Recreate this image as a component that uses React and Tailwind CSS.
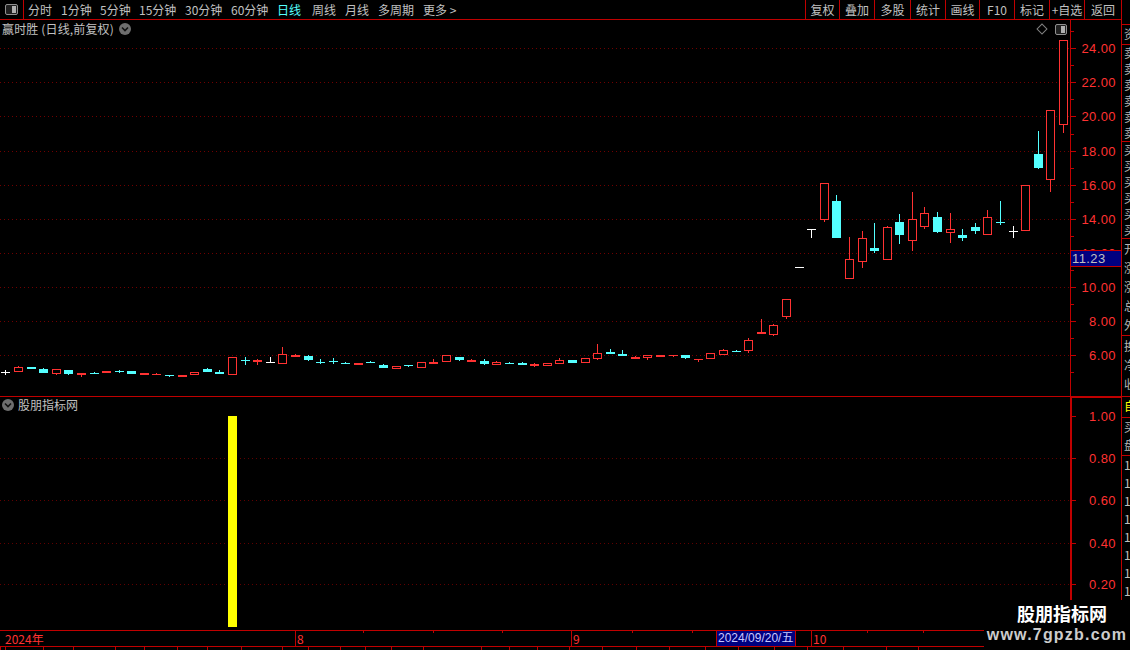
import React from 'react'

// kind, bodyTop, bodyBottom, wickTop, wickBottom (page pixels)
// r = hollow red, R = solid red, c = solid cyan, w = white doji
const candles = [
  ['w', 372, 373, 370, 375], ['r', 367, 372, 366, 372], ['c', 367, 369, 367, 369], ['c', 369, 373, 368, 373], ['r', 369, 374, 369, 375],
  ['c', 370, 374, 370, 375], ['R', 373, 375, 373, 377], ['c', 373, 374, 372, 374], ['R', 371, 373, 371, 373], ['c', 371, 372, 370, 373],
  ['c', 371, 374, 371, 374], ['R', 373, 375, 373, 375], ['R', 374, 375, 373, 375], ['c', 375, 376, 375, 377], ['R', 375, 377, 375, 377],
  ['r', 372, 375, 372, 375], ['c', 369, 372, 368, 372], ['c', 372, 374, 370, 374], ['r', 357, 375, 357, 375], ['c', 360, 361, 357, 365],
  ['R', 360, 362, 359, 365], ['w', 362, 363, 357, 363], ['r', 354, 364, 347, 364], ['r', 355, 357, 354, 357], ['c', 356, 360, 355, 361],
  ['c', 362, 363, 359, 364], ['c', 361, 362, 358, 364], ['c', 363, 364, 362, 364], ['R', 363, 365, 363, 365], ['c', 362, 363, 361, 363],
  ['c', 365, 368, 364, 368], ['r', 366, 369, 366, 369], ['c', 365, 366, 365, 367], ['r', 362, 368, 362, 368], ['R', 362, 364, 359, 364],
  ['r', 355, 362, 355, 362], ['c', 357, 360, 357, 361], ['R', 360, 362, 359, 362], ['c', 361, 364, 359, 365], ['r', 362, 365, 361, 365],
  ['c', 363, 364, 362, 364], ['c', 363, 365, 362, 365], ['R', 364, 366, 363, 367], ['r', 363, 366, 363, 366], ['r', 360, 364, 358, 364],
  ['c', 360, 363, 360, 363], ['r', 358, 363, 358, 363], ['r', 353, 359, 344, 360], ['c', 352, 354, 349, 354], ['c', 354, 356, 350, 356],
  ['R', 357, 359, 356, 359], ['r', 355, 358, 355, 360], ['R', 355, 357, 355, 357], ['R', 355, 356, 355, 357], ['c', 355, 358, 355, 359],
  ['R', 359, 360, 359, 362], ['r', 353, 359, 353, 359], ['r', 350, 355, 349, 355], ['c', 351, 352, 350, 352], ['r', 340, 351, 338, 353],
  ['r', 332, 334, 319, 334], ['r', 325, 335, 324, 336], ['r', 299, 317, 299, 319], ['w', 267, 268, 267, 268], ['w', 229, 230, 229, 238],
  ['r', 183, 220, 183, 222], ['c', 201, 238, 195, 238], ['r', 259, 279, 237, 279], ['r', 238, 262, 231, 268], ['c', 248, 251, 223, 253],
  ['r', 227, 260, 226, 260], ['c', 222, 235, 214, 244], ['r', 219, 241, 192, 251], ['r', 213, 227, 207, 229], ['c', 217, 232, 212, 233],
  ['r', 229, 233, 213, 243], ['c', 235, 238, 229, 241], ['c', 227, 231, 223, 234], ['r', 217, 235, 210, 235], ['c', 222, 223, 201, 225],
  ['w', 231, 232, 226, 238], ['r', 185, 231, 185, 231], ['c', 154, 168, 131, 169], ['r', 110, 180, 110, 192], ['r', 40, 125, 40, 133],
]

const candleColor = { r: '#ff3232', R: '#ff3232', c: '#54ffff', w: '#ffffff' }

const priceTicks = [
  ['24.00', 48], ['22.00', 82], ['20.00', 116], ['18.00', 151], ['16.00', 185],
  ['14.00', 219], ['12.00', 253], ['10.00', 287], ['8.00', 321], ['6.00', 355],
]
const indicatorTicks = [['1.00', 416], ['0.80', 458], ['0.60', 500], ['0.40', 543], ['0.20', 584]]

const dateTicks = [363, 433, 502, 632, 692, 867, 923]
const bottomCells = [5, 38, 30, 42, 29, 33, 30, 34, 41, 26, 32, 25, 26, 32, 58, 28, 28, 32, 33, 34, 33, 36, 33, 36, 33, 36, 43, 32, 32]

function PaneIcon({ className }) {
  return (
    <div className={`flex justify-end rounded-[2px] border border-[#909090] bg-[#202020] p-px ${className}`}>
      <div className="h-full w-1 bg-[#b0b0b0]" />
    </div>
  )
}

function RoundChevron({ className }) {
  return (
    <svg className={className} width="12" height="12" viewBox="0 0 12 12">
      <circle cx="6" cy="6" r="6" fill="#6e6e6e" />
      <path d="M3 4.5 L6 7.5 L9 4.5" fill="none" stroke="#111" strokeWidth="1.6" />
    </svg>
  )
}

function Candle({ c, i }) {
  const [kind, top, bottom, wickTop, wickBottom] = c
  const px = Math.round(232 + (i - 18) * 12.59)
  const color = candleColor[kind]
  return (
    <g>
      <line x1={px + 0.5} x2={px + 0.5} y1={wickTop} y2={wickBottom} stroke={color} />
      {kind === 'r' ? (
        <rect x={px - 3.5} y={top + 0.5} width="8" height={bottom - top - 1} fill="#000" stroke={color} />
      ) : (
        <rect x={px - 4} y={top} width="9" height={bottom - top} fill={color} />
      )}
    </g>
  )
}

function SideRow({ h, text, color = 'text-[#b4b4b4]', leading = 'leading-[17px]' }) {
  return (
    <div className={`${h} shrink-0 overflow-hidden border-b border-[#c00000] pl-[2px] ${color} ${leading}`}>
      {text.split('').map((ch, i) => (
        <div key={i} className="w-3">{ch}</div>
      ))}
    </div>
  )
}

const tabs = [
  ['分时', 'w-[24px]'], ['1分钟', 'w-[30px]'], ['5分钟', 'w-[30px]'], ['15分钟', 'w-[37px]'], ['30分钟', 'w-[37px]'],
  ['60分钟', 'w-[37px]'], ['日线', 'w-[24px] text-[#54ffff]'], ['周线', 'w-[24px] ml-[2px]'], ['月线', 'w-[24px]'], ['多周期', 'w-[36px]'], ['更多 >', 'w-[40px]'],
]
const actions = [
  ['复权', 'w-[34px]'], ['叠加', 'w-[35px]'], ['多股', 'w-[36px]'], ['统计', 'w-[35px]'], ['画线', 'w-[34px]'],
  ['F10', 'w-[35px]'], ['标记', 'w-[35px]'], ['+自选', 'w-[35px]'], ['返回', 'w-[37px]'],
]

export default function App() {
  return (
    <div className="relative flex h-[650px] w-[1130px] flex-col overflow-hidden bg-black font-['Noto_Sans_CJK_SC','Liberation_Sans',sans-serif] text-[12px] text-[#c0c0c0]">
      {/* toolbar */}
      <div className="flex h-5 shrink-0">
        <div className="flex w-[1122px] border-r border-b border-[#c00000]">
          <div className="flex w-6 items-center justify-center border-r border-[#c00000] pr-[1px]">
            <PaneIcon className="h-[11px] w-[13px]" />
          </div>
          <div className="ml-1 flex flex-1 items-center gap-[9px] whitespace-nowrap">
            {tabs.map(([label, cls]) => (
              <span key={label} className={cls}>{label}</span>
            ))}
          </div>
          {actions.map(([label, cls]) => (
            <div key={label} className={`flex items-center justify-center whitespace-nowrap border-l border-[#c00000] ${cls}`}>{label}</div>
          ))}
        </div>
      </div>

      <div className="flex flex-1">
        <div className="flex w-[1121px] flex-col">
          {/* kline pane */}
          <div className="relative h-[377px] shrink-0">
            <svg width="1121" height="377" viewBox="0 20 1121 377" shapeRendering="crispEdges" className="block">
              {priceTicks.map(([label, y]) => (
                <line key={label} x1="0" x2="1070" y1={y + 0.5} y2={y + 0.5} stroke="#700000" strokeDasharray="1 3" />
              ))}
              {candles.map((c, i) => <Candle key={i} c={c} i={i} />)}
              <line x1="1070.5" x2="1070.5" y1="20" y2="397" stroke="#c00000" />
              <line x1="0" x2="1121" y1="396.5" y2="396.5" stroke="#c00000" />
              {priceTicks.map(([label, y]) => (
                <g key={label}>
                  <line x1="1070" x2="1076" y1={y + 0.5} y2={y + 0.5} stroke="#c00000" />
                  <line x1="1070" x2="1074" y1={y - 16.5} y2={y - 16.5} stroke="#c00000" />
                  <text x="1116" y={y + 5} textAnchor="end" className="fill-[#ff3232] font-['Liberation_Sans'] text-[13px] tracking-[0.4px]">{label}</text>
                </g>
              ))}
              <line x1="1070" x2="1074" y1="372.5" y2="372.5" stroke="#c00000" />
            </svg>
            <div className="absolute left-[2px] top-0 flex items-center gap-[5px] leading-[17px]">
              <span className="whitespace-nowrap tracking-[0.15px]">赢时胜 (日线,前复权)</span>
              <RoundChevron />
            </div>
            <div className="absolute left-[1038px] top-[5px] h-[8px] w-[8px] rotate-45 border border-[#808080]" />
            <PaneIcon className="absolute left-[1055px] top-[4px] h-[11px] w-[12px]" />
            {/* current price */}
            <div className="absolute left-[1071px] top-[230px] h-[17px] w-[50px] border-y border-[#c00000] bg-[#000080] pl-[1px] font-['Liberation_Sans'] text-[13px] leading-[15px] tracking-[0.4px]">
              11.23
            </div>
          </div>

          {/* indicator pane */}
          <div className="relative h-[233px] shrink-0">
            <svg width="1121" height="233" viewBox="0 397 1121 233" shapeRendering="crispEdges" className="block">
              {indicatorTicks.slice(1).map(([label, y]) => (
                <line key={label} x1="0" x2="1070" y1={y + 0.5} y2={y + 0.5} stroke="#600000" strokeDasharray="1 3" />
              ))}
              <rect x="228" y="416" width="9" height="211" fill="#ffff00" />
              <rect x="1070" y="397" width="2" height="233" fill="#c00000" />
              <rect x="1070" y="397" width="51" height="1" fill="#c00000" />
              {indicatorTicks.map(([label, y]) => (
                <g key={label}>
                  <line x1="1070" x2="1076" y1={y + 0.5} y2={y + 0.5} stroke="#c00000" />
                  <text x="1116" y={y + 5} textAnchor="end" className="fill-[#ff3232] font-['Liberation_Sans'] text-[13px] tracking-[0.4px]">{label}</text>
                </g>
              ))}
            </svg>
            <div className="absolute left-[2px] top-0 flex items-center gap-[4px] leading-[16px]">
              <RoundChevron />
              <span>股朋指标网</span>
            </div>
          </div>

          {/* date axis */}
          <div className="relative flex h-[17px] shrink-0 border-y border-[#c00000] text-[#ff3232] leading-[15px]">
            <div className="w-[295px] pl-[5px]">2024年</div>
            <div className="w-[276px] border-l border-[#c00000] pl-[1px]">8</div>
            <div className="w-[145px] border-l border-[#c00000] pl-[1px]">9</div>
            <div className="w-[80px] whitespace-nowrap border-x border-[#c00000] bg-[#000080] pl-[1px] font-['Liberation_Sans','Noto_Sans_CJK_SC'] text-[#c8c8ff]">2024/09/20/五</div>
            <div className="w-[15px]" />
            <div className="flex-1 border-l border-[#c00000] pl-[1px]">10</div>
            {dateTicks.map(x => (
              <div key={x} className="absolute top-0 h-[2px] w-px bg-[#c00000]" style={{ left: x }} />
            ))}
          </div>

          {/* bottom tabs, cut off by the window */}
          <div className="flex h-[3px] overflow-hidden">
            {bottomCells.map((w, i) => (
              <div key={i} className="h-full shrink-0 border-l border-[#c00000]" style={{ width: w }} />
            ))}
          </div>
        </div>

        {/* quote column, cut off by the window */}
        <div className="relative flex w-[9px] flex-col overflow-hidden border-l border-[#c00000]">
          <div className="h-[5px] shrink-0 border-b border-[#c00000]" />
          <SideRow h="h-[20px]" text="资" />
          <SideRow h="h-[97px]" text="卖卖卖卖卖卖" leading="leading-[16px]" />
          <SideRow h="h-[97px]" text="买买买买买买" leading="leading-[16px]" />
          <SideRow h="h-[97px]" text="开涨涨总外" leading="leading-[19px]" />
          <SideRow h="h-[61px]" text="换净收" leading="leading-[19px]" />
          <SideRow h="h-[21px]" text="自" color="text-[#ffff00]" />
          <SideRow h="h-[38px]" text="买盘" leading="leading-[18px]" />
          <div className="pl-[2px] leading-[18px]">
            {[1, 2, 3, 4, 5, 6, 7, 8].map(n => <div key={n}>1</div>)}
          </div>
        </div>
      </div>

      {/* site watermark */}
      <div className="absolute left-[984px] top-[600px] flex h-[50px] w-[146px] flex-col items-center bg-black text-white">
        <div className="ml-[10px] text-[18px] font-bold leading-[26px]">股朋指标网</div>
        <div className="font-['Liberation_Sans'] text-[16px] font-bold leading-[18px] tracking-[1.2px] text-[#cccccc]">www.7gpzb.com</div>
      </div>
    </div>
  )
}
